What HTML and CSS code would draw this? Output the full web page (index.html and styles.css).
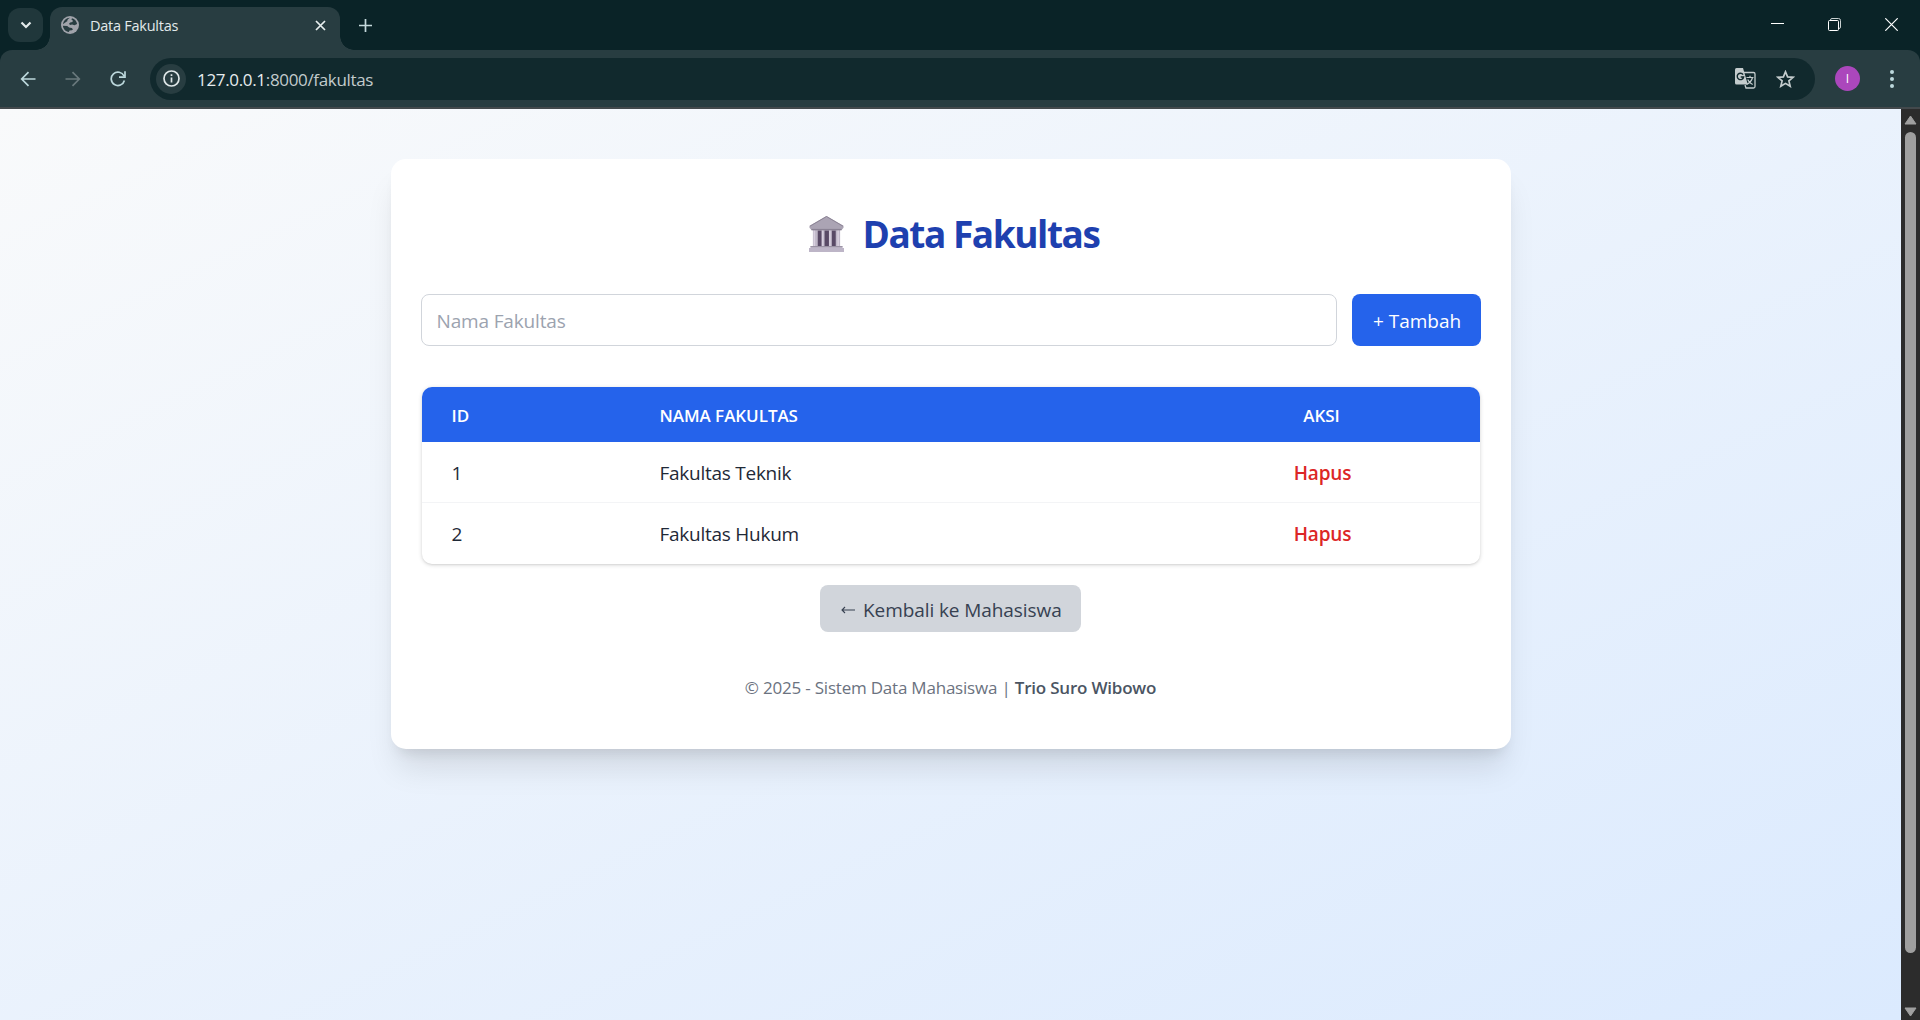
FILE: index.html
```html
<!DOCTYPE html>
<html lang="id">
<head>
<meta charset="utf-8">
<title>Data Fakultas</title>
<link rel="stylesheet" href="styles.css">
</head>
<body>
<div class="browser">
  <header class="tabstrip">
    <button class="tab-search" aria-label="Cari tab"><svg width="12" height="8" viewBox="0 0 12 8"><path d="M1.5 1.5 6 6l4.500-4.500" fill="none" stroke="#e3eaeb" stroke-width="2.200"/></svg></button>
    <div class="tab">
      <svg class="globe" width="18" height="18" viewBox="0 0 18 18"><circle cx="9" cy="9" r="9" fill="#a0a3aa"/><path d="M9 1.800C7.500 2.500 6 4 6.300 5.300 5 5.800 3.800 7 2 8.300c.3-3.400 3-6.300 7-6.500ZM11 2.200c2.600.7 4.700 3 5.100 5.800l-2.600 1.300-2.400-.8-2.100.6-1-1.400 1.200-1.300 2.300-.5.3-1.500-1.400-1ZM1.900 9.800l4.300.1 1.900 1.700 2.600.4 1.300 1.200-1.100 1.100-2.400.3-.6 1.500C4.500 15.600 2.200 13 1.900 9.800Z" fill="#283d41"/></svg>
      <span class="tab-title">Data Fakultas</span>
      <svg class="tab-close" width="11" height="11" viewBox="0 0 11 11"><path d="m1 1 9 9M10 1l-9 9" stroke="#e8efef" stroke-width="1.700"/></svg>
    </div>
    <svg class="new-tab" width="13" height="13" viewBox="0 0 13 13"><path d="M6.500 0v13M0 6.500h13" stroke="#c5d9dc" stroke-width="1.700"/></svg>
    <div class="window-controls">
      <svg width="13" height="13" viewBox="0 0 13 13"><path d="M0 5.500h13" stroke="#fff"/></svg>
      <svg width="13" height="13" viewBox="0 0 13 13"><path d="M2.500 2.500v-.5q0-1.500 1.500-1.500h6.500q2 0 2 2v6.500q0 1.500-1.500 1.500h-.5" fill="none" stroke="#c9d0d1"/><rect x=".5" y="2.500" width="10" height="10" rx="1" fill="none" stroke="#fff"/></svg>
      <svg width="13" height="13" viewBox="0 0 13 13"><path d="m.3.3 12.400 12.400M12.700.3.300 12.700" stroke="#fff" stroke-width="1.200"/></svg>
    </div>
  </header>
  <div class="toolbar">
    <svg class="nav" width="16" height="16" viewBox="0 0 16 16"><path d="M15.500 8H2M8.500 1.200 1.700 8l6.800 6.800" fill="none" stroke="#bcd8dc" stroke-width="1.700"/></svg>
    <svg class="nav" width="16" height="16" viewBox="0 0 16 16"><path d="M.5 8H14M7.500 1.200 14.300 8l-6.800 6.800" fill="none" stroke="#69797c" stroke-width="1.700"/></svg>
    <svg class="nav" width="16" height="16" viewBox="0 0 16 16"><path d="M14.400 9.500A6.700 6.700 0 1 1 14 5M15 .3v5.900H9" fill="none" stroke="#bcd8dc" stroke-width="1.700"/></svg>
    <div class="address">
      <span class="site-info"><svg width="17" height="17" viewBox="0 0 17 17"><circle cx="8.500" cy="8.500" r="7.500" fill="none" stroke="#dfe7e8" stroke-width="1.700"/><path d="M8.500 7.500v5M8.500 4.200v1.900" stroke="#dfe7e8" stroke-width="1.700"/></svg></span>
      <span class="url">127.0.0.1<span class="path">:8000/fakultas</span></span>
      <svg class="translate" width="21" height="21" viewBox="0 0 21 21"><path d="M9 4.500h9.500q1.500 0 1.500 1.500v12.500q0 1.500-1.500 1.500H11l-1-3" fill="none" stroke="#c4cccd" stroke-width="1.300"/><path d="M1.500 0H8l4.800 16.500H1.500Q0 16.500 0 15V1.500Q0 0 1.500 0Z" fill="#c4cccd"/><path d="M8.100 6.600A3.200 3.200 0 1 0 8.600 9H5.700" fill="none" stroke="#11292d" stroke-width="1.400"/><path d="M11.500 9.500h7M15 7.800v1.700M17.500 9.500q-1 4.500-6 7M12.700 11.500q1.500 3.500 5 5" fill="none" stroke="#c4cccd" stroke-width="1.200"/></svg>
      <svg class="star" width="19" height="18" viewBox="0 0 19 18"><path d="m9.500 1.800 2.100 5.100 5.500.4-4.200 3.600 1.300 5.400-4.700-2.900-4.700 2.900 1.300-5.400-4.200-3.600 5.500-.4Z" fill="none" stroke="#c4cccd" stroke-width="1.700"/></svg>
    </div>
    <span class="avatar">I</span>
    <svg class="menu" width="4" height="18" viewBox="0 0 4 18"><g fill="#bcd8dc"><circle cx="2" cy="2" r="2"/><circle cx="2" cy="9" r="2"/><circle cx="2" cy="16" r="2"/></g></svg>
  </div>
  <div class="viewport">
    <main class="page">
      <section class="card">
        <h1><svg width="35" height="36" viewBox="0 0 36 37"><path d="M4 14h28v18H4z" fill="#c0b8c9"/><path d="M9 15h4v16H9zM16 15h4.500v16H16zM23.500 15h4v16h-4z" fill="#594a66"/><path d="M5.500 14v17M14 14v17M21.500 14v17M30 14v17" stroke="#d8d0df" stroke-width="1.600"/><path d="M18 0 .5 10v2l2 2.500h31l2-2.500v-2Z" fill="#aba4b4"/><path d="M18 .5 1 10.500M18 .5l17 10" stroke="#8a8294"/><path d="M2.500 14h31" stroke="#8a8294" stroke-width="1.500"/><path d="M1.500 31h33v2H36v4H0v-4h1.500Z" fill="#bdb5c7"/><path d="M1.500 31.500h33" stroke="#948b9e"/></svg><span>Data Fakultas</span></h1>
        <form class="add-form">
          <input class="field" type="text" placeholder="Nama Fakultas">
          <button class="add" type="button">+ Tambah</button>
        </form>
        <table class="list">
          <thead><tr><th class="col-id">ID</th><th class="col-name">NAMA FAKULTAS</th><th class="col-action">AKSI</th></tr></thead>
          <tbody>
            <tr><td>1</td><td class="name">Fakultas Teknik</td><td class="action">Hapus</td></tr>
            <tr><td>2</td><td class="name">Fakultas Hukum</td><td class="action">Hapus</td></tr>
          </tbody>
        </table>
        <a class="back"><svg width="14" height="10" viewBox="0 0 14 10"><path d="M14 5H1M4 2 1 5l3 3" fill="none" stroke="#374151" stroke-width="1.100"/></svg><span>Kembali ke Mahasiswa</span></a>
        <footer><span>© 2025 - Sistem Data Mahasiswa |</span> <strong>Trio Suro Wibowo</strong></footer>
      </section>
    </main>
    <div class="scrollbar">
      <svg width="13" height="10" viewBox="0 0 13 10"><path d="M6.500 1 12 9H1Z" fill="#a0a0a0" stroke="#a0a0a0" stroke-linejoin="round"/></svg>
      <div class="thumb"></div>
      <svg width="13" height="10" viewBox="0 0 13 10"><path d="M6.500 9 12 1H1Z" fill="#a0a0a0" stroke="#a0a0a0" stroke-linejoin="round"/></svg>
    </div>
  </div>
</div>
</body>
</html>
```
FILE: styles.css
```css
* { box-sizing: border-box; }
body { margin: 0; overflow: hidden; font-family: "Open Sans", "Noto Sans", sans-serif; }
button, input { font-family: inherit; border: 0; padding: 0; }
svg { display: block; flex: none; }

.browser { width: 1920px; height: 1020px; display: flex; flex-direction: column; background: #0a2327; }

/* Tab strip */
.tabstrip { height: 50px; flex: none; display: flex; align-items: flex-start; padding: 8px 0 0 8px; }
.tab-search { width: 35px; height: 34px; border-radius: 12px; background: #20373b; display: flex; align-items: center; justify-content: center; }
.tab { position: relative; width: 290px; height: 43px; margin: -1px 0 0 7px; padding: 0 14px 7px 11px; border-radius: 12px 12px 0 0; background: #283d41; display: flex; align-items: center; }
.tab::before, .tab::after { content: ""; position: absolute; bottom: 0; width: 14px; height: 14px; }
.tab::before { left: -14px; background: radial-gradient(circle at 0 0, transparent 13.500px, #283d41 14px); }
.tab::after { right: -14px; background: radial-gradient(circle at 100% 0, transparent 13.500px, #283d41 14px); }
.tab-title { margin-left: 11px; padding-top: 1px; color: #e2eaeb; font-size: 14.500px; line-height: 20px; letter-spacing: -0.250px; }
.tab-close { margin-left: auto; }
.new-tab { margin: 11px 0 0 19px; }
.window-controls { margin: 10px 22px 0 auto; display: flex; gap: 44px; }

/* Toolbar */
.toolbar { height: 59px; flex: none; display: flex; align-items: center; padding: 0 20px; background: #283d41; border-bottom: 2px solid #43494c; border-radius: 12px 12px 0 0; }
.nav { margin-right: 29px; }
.address { width: 1665px; height: 42px; margin-left: -5px; padding: 0 20px 0 6px; border-radius: 21px; background: #11292d; display: flex; align-items: center; }
.site-info { width: 30px; height: 30px; border-radius: 50%; background: #283d41; display: flex; align-items: center; justify-content: center; }
.url { margin-left: 11px; padding-top: 2px; color: #e6eced; font-size: 17px; line-height: 24px; letter-spacing: -0.330px; }
.path { color: #c2cbcc; }
.translate { margin-left: auto; margin-right: 20px; }
.avatar { width: 25px; height: 25px; margin-left: 20px; border-radius: 50%; background: #ab47bc; color: #fff; font-size: 12px; display: flex; align-items: center; justify-content: center; }
.menu { margin-left: 30px; }

/* Page */
.viewport { flex: 1; display: flex; min-height: 0; }
.page { flex: 1; padding-top: 50px; background: linear-gradient(to bottom right, #f9fafb, #dbeafe); }
.card { width: 1120px; height: 590px; margin: 0 auto; padding: 52px 30px 0; border-radius: 15px; background: #fff; box-shadow: 0 25px 31px -6px rgba(0, 0, 0, .1), 0 10px 13px -7px rgba(0, 0, 0, .1); display: flex; flex-direction: column; align-items: center; }
h1 { width: 100%; height: 45px; margin: 0 0 38px; padding-left: 388px; display: flex; align-items: center; color: #1e40af; font-size: 37px; font-weight: 700; line-height: 45px; letter-spacing: -1.450px; white-space: nowrap; }
h1 span { margin: -1px 0 0 19px; }
.add-form { width: 1060px; display: flex; gap: 15px; }
.field { flex: 1; height: 52px; padding: 2px 15px 0; border: 1px solid #d1d5db; border-radius: 8px; background: #fff; font-size: 19px; letter-spacing: -0.150px; }
.field::placeholder { color: #9ca3af; opacity: 1; }
.add { width: 129px; height: 52px; padding: 2px 0 0 2px; border-radius: 8px; background: #2563eb; color: #fff; font-size: 19px; }
.list { width: 1058px; margin: 41px 0 0; border-collapse: separate; border-spacing: 0; border-radius: 10px; overflow: hidden; table-layout: fixed; box-shadow: 0 1px 4px rgba(0, 0, 0, .16), 0 1px 2px rgba(0, 0, 0, .06); color: #1f2937; font-size: 19px; }
.list th { height: 55px; padding: 1px 30px 0; background: #2563eb; color: #fff; font-size: 17px; font-weight: 600; letter-spacing: -0.050px; text-align: left; }
.list td { height: 61px; padding: 2px 30px 0; }
.list tr:last-child td { padding-top: 0; }
.list tbody tr:first-child td { border-bottom: 1px solid #f3f4f6; }
.col-id { width: 208px; }
.list .name { letter-spacing: -0.260px; }
.list .col-action { width: 316px; text-align: center; }
.list .action { padding-left: 32px; color: #dc2626; font-weight: 600; letter-spacing: -0.150px; text-align: center; }
.back { width: 261px; height: 47px; margin-top: 21px; padding: 2px 0 0 21px; border-radius: 8px; background: #d1d5db; color: #374151; display: flex; align-items: center; font-size: 19px; letter-spacing: -0.080px; white-space: nowrap; }
.back span { margin-left: 8px; }
footer { margin-top: 43px; color: #6b7280; font-size: 17px; line-height: 26px; letter-spacing: -0.210px; white-space: nowrap; }
footer strong { color: #4b5563; font-weight: 600; }

/* Scrollbar */
.scrollbar { width: 19px; padding: 6px 0 3px; background: #2c2c2c; display: flex; flex-direction: column; align-items: center; }
.thumb { width: 11px; height: 821px; margin: 7px 0 auto; border-radius: 6px; background: #9f9f9f; }
```
